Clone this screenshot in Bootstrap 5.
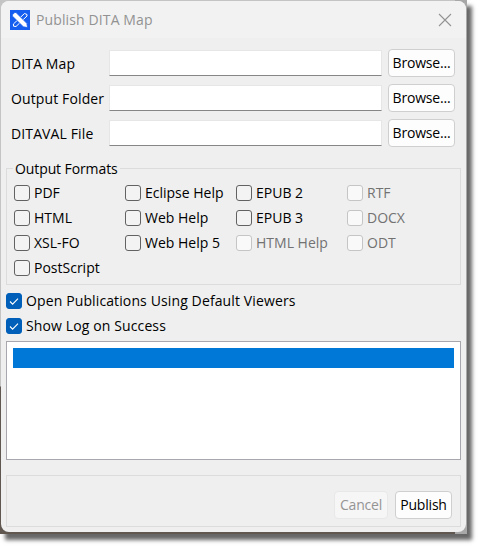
<!DOCTYPE html>
<html lang="en">
<head>
<meta charset="utf-8">
<title>Publish DITA Map</title>
<link href="https://cdn.jsdelivr.net/npm/bootstrap@5.3.0/dist/css/bootstrap.min.css" rel="stylesheet">
<style>
body{width:482px;height:549px;background:#fff;font-family:"Open Sans","Noto Sans",sans-serif;font-size:14px;line-height:20px;color:#000;letter-spacing:.12px}
.desk{width:467px;height:534px;padding:1px 1px 2px;background:linear-gradient(#a8a8a8,#a8a8a8) right/12px 100% no-repeat,linear-gradient(#c4c4c4 0 386px,#5f5750 387px);box-shadow:5px 6px 4px rgba(0,0,0,.6)}
.dlg{width:465px;height:531px;background:#efefef;border-radius:8px;padding:0 5px}
.titlebar{height:37px;margin:0 -5px;padding:0 14px 0 9px;background:#f2f2f2;color:#929292;border-radius:8px 8px 0 0}
.titlebar svg{flex:none}
.titlebar span{margin-left:6px}
.fields{padding:11px 6px 0 5px;display:grid;row-gap:7px}
.fields label{width:98px;padding-top:1px}
.fields .form-control{width:273px;height:26px;min-height:0;border:1px solid #e6e6e6;border-bottom-color:#868686;border-radius:0;padding:0}
.fields .btn{width:67px;margin-left:6px}
.btn{height:28px;padding:0;font-size:14px;line-height:26px;letter-spacing:-.2px;background:#fdfdfd;border:1px solid #cfcfcf;border-radius:4px;color:#000}
.btn:disabled{background:#f6f6f6;border-color:#e8e8e8;color:#949494;opacity:1}
.panel{border:1px solid #dcdcdc}
.formats{height:117px;margin-top:21px;padding:0 7px}
.formats legend{width:auto;height:20px;margin:-10px 0 0 -1px;padding:0 2px;font-size:14px;line-height:20px;letter-spacing:-.1px;background:#efefef;float:none;display:table}
.cols{display:grid;grid-template-columns:repeat(4,111px);margin-top:2px}
.cols .tick{letter-spacing:0}
.tick{height:25px;padding-bottom:1px}
.tick .form-check-input{width:16px;height:16px;margin:0 4px 0 0;border:1px solid #626262;border-radius:3px;background-color:#f3f3f3;flex:none}
.tick .form-check-input:checked{background-color:#005fb8;border-color:#005fb8;background-image:none}
.tick .form-check-input:disabled{opacity:1;border-color:#c5c5c5;background-color:#f9f9f9}
.tick .form-check-input:disabled + span{color:#727272}
.tick svg{position:absolute;left:3px;top:7px}
.log{height:119px;border:1px solid #a7a7ad;background:#fff;padding:6px;margin-top:2px}
.log div{height:20px;background:#0078d7}
.actions{height:52px;margin-top:15px;padding:8px 8px 0}
</style>
<script src="https://cdn.jsdelivr.net/npm/bootstrap@5.3.0/dist/js/bootstrap.bundle.min.js"></script>
</head>
<body class="overflow-hidden">
<div class="desk">
<main class="dlg">
<header class="titlebar d-flex align-items-center">
<svg width="20" height="20" viewBox="0 0 20 20"><path fill="#155eef" d="M0 0h20v20H0z"/><g fill="none" stroke="#fff"><path stroke-width="1" d="M14.5 3.5 17 4.5V6L6 16.5 3.5 16.2 3.4 14z"/><path fill="#fff" stroke="#155eef" stroke-width=".8" d="M2.3 4.8 4.8 2.5H6L16.8 13.3l.8 4.3-4.3-.8L2.3 6z"/></g></svg>
<span>Publish DITA Map</span>
<svg class="ms-auto" width="14" height="14" viewBox="0 0 14 14" fill="none" stroke="#939393" stroke-width="1.1"><path d="m1 1 12 12M13 1 1 13"/></svg>
</header>
<div class="fields">
<div class="d-flex align-items-center"><label for="f1">DITA Map</label><input class="form-control" id="f1"><button class="btn">Browse...</button></div>
<div class="d-flex align-items-center"><label for="f2">Output Folder</label><input class="form-control" id="f2"><button class="btn">Browse...</button></div>
<div class="d-flex align-items-center"><label for="f3">DITAVAL File</label><input class="form-control" id="f3"><button class="btn">Browse...</button></div>
</div>
<section class="formats panel">
<legend>Output Formats</legend>
<div class="cols">
<div>
<label class="tick d-flex align-items-center"><input class="form-check-input" type="checkbox"><span>PDF</span></label>
<label class="tick d-flex align-items-center"><input class="form-check-input" type="checkbox"><span>HTML</span></label>
<label class="tick d-flex align-items-center"><input class="form-check-input" type="checkbox"><span>XSL-FO</span></label>
<label class="tick d-flex align-items-center"><input class="form-check-input" type="checkbox"><span>PostScript</span></label>
</div>
<div>
<label class="tick d-flex align-items-center"><input class="form-check-input" type="checkbox"><span>Eclipse Help</span></label>
<label class="tick d-flex align-items-center"><input class="form-check-input" type="checkbox"><span>Web Help</span></label>
<label class="tick d-flex align-items-center"><input class="form-check-input" type="checkbox"><span>Web Help 5</span></label>
</div>
<div>
<label class="tick d-flex align-items-center"><input class="form-check-input" type="checkbox"><span>EPUB 2</span></label>
<label class="tick d-flex align-items-center"><input class="form-check-input" type="checkbox"><span>EPUB 3</span></label>
<label class="tick d-flex align-items-center"><input class="form-check-input" type="checkbox" disabled><span>HTML Help</span></label>
</div>
<div>
<label class="tick d-flex align-items-center"><input class="form-check-input" type="checkbox" disabled><span>RTF</span></label>
<label class="tick d-flex align-items-center"><input class="form-check-input" type="checkbox" disabled><span>DOCX</span></label>
<label class="tick d-flex align-items-center"><input class="form-check-input" type="checkbox" disabled><span>ODT</span></label>
</div>
</div>
</section>
<div class="pt-1">
<label class="tick d-flex align-items-center position-relative"><input class="form-check-input" type="checkbox" checked><svg width="10" height="10" viewBox="0 0 10 10" fill="none" stroke="#fff" stroke-width="1.1"><path d="m1 5.5 2.6 2.6L9 2.7"/></svg><span>Open Publications Using Default Viewers</span></label>
<label class="tick d-flex align-items-center position-relative"><input class="form-check-input" type="checkbox" checked><svg width="10" height="10" viewBox="0 0 10 10" fill="none" stroke="#fff" stroke-width="1.1"><path d="m1 5.5 2.6 2.6L9 2.7"/></svg><span>Show Log on Success</span></label>
</div>
<div class="log"><div></div></div>
<footer class="actions panel d-flex justify-content-end align-items-center">
<button class="btn" style="width:54px" disabled>Cancel</button>
<button class="btn" style="width:57px;margin-left:7px">Publish</button>
</footer>
</main>
</div>
</body>
</html>
